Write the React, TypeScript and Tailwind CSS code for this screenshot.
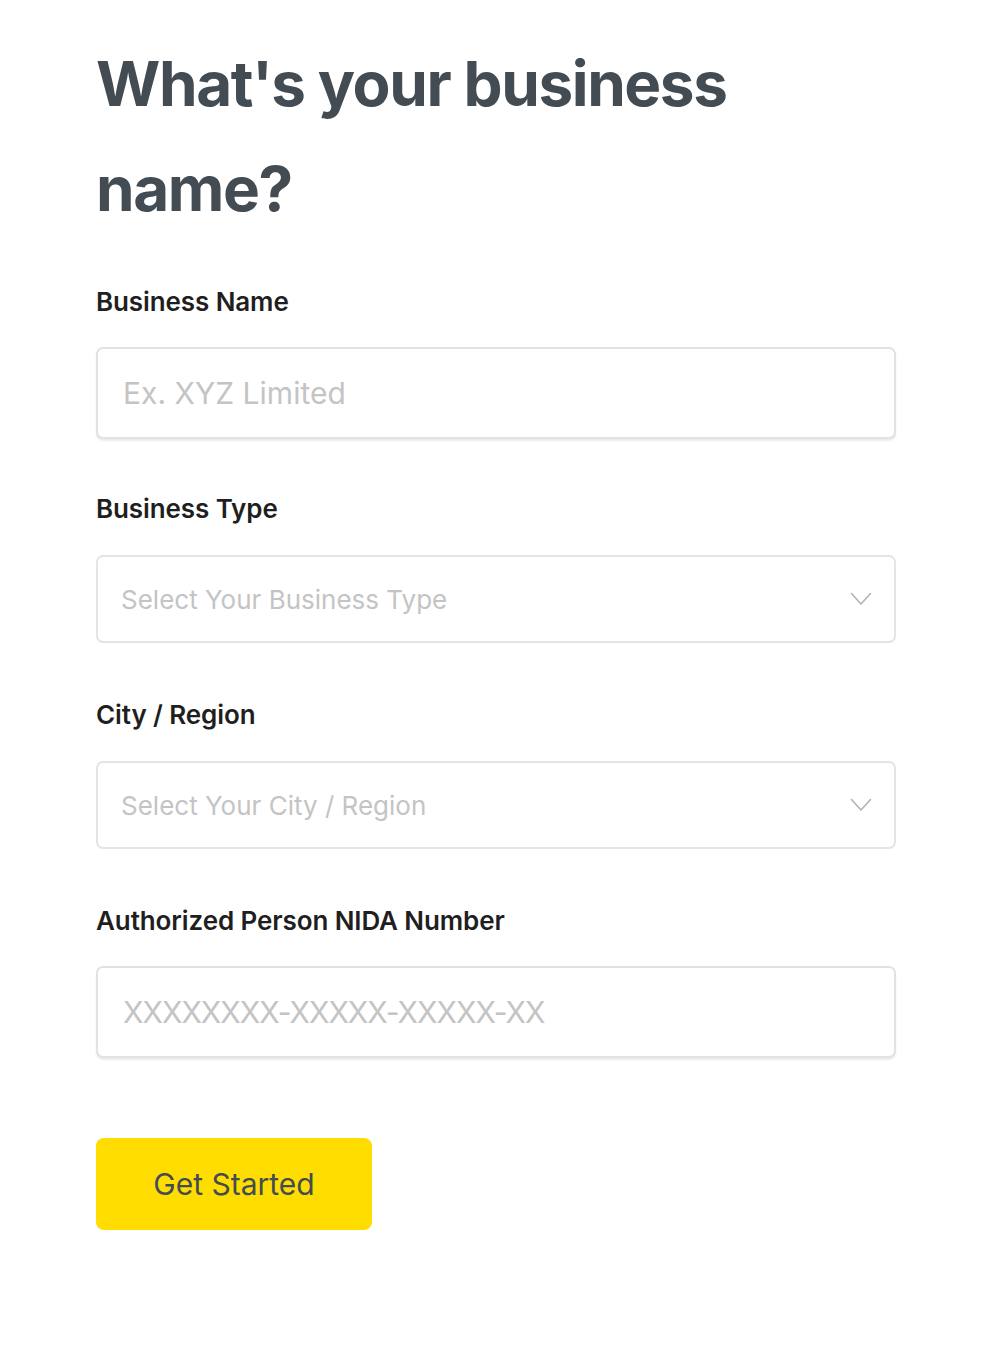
import React from 'react';

const Label: React.FC<{ children: React.ReactNode }> = ({ children }) => (
  <label className="block text-[26px] font-semibold text-[#1f1f1f] leading-[30px] tracking-[-0.1px]">{children}</label>
);

const TextField: React.FC<{ placeholder: string; tight?: boolean }> = ({ placeholder, tight }) => (
  <input
    type="text"
    placeholder={placeholder}
    className={
      tight
        ? "mt-[30px] block w-full h-[92px] rounded-[7px] border-2 border-[#e2e2e2] bg-white px-[25px] text-[30px] tracking-[-1px] text-[#333] outline-none shadow-[0_2px_2px_rgba(0,0,0,0.08)] placeholder:text-[#c4c4c4]"
        : "mt-[30px] block w-full h-[92px] rounded-[7px] border-2 border-[#e2e2e2] bg-white px-[25px] text-[30px] text-[#333] outline-none shadow-[0_2px_2px_rgba(0,0,0,0.08)] placeholder:text-[#c4c4c4]"
    }
  />
);

const Chevron = () => (
  <svg width="22" height="14" viewBox="0 0 22 14" fill="none" className="shrink-0">
    <polyline points="1.5,1.5 11,12 20.5,1.5" stroke="#b3b3b3" strokeWidth="1.6" strokeLinejoin="round" strokeLinecap="round" />
  </svg>
);

const SelectField: React.FC<{ placeholder: string }> = ({ placeholder }) => (
  <div className="mt-[31px] flex items-center justify-between w-full h-[88px] rounded-[7px] border-2 border-[#e4e4e4] bg-white pl-[23px] pr-[22px]">
    <span className="text-[26px] text-[#c4c4c4]">{placeholder}</span>
    <Chevron />
  </div>
);

export default function App() {
  return (
    <div className="min-h-[1350px] bg-white" style={{ fontFamily: 'Inter, "Noto Sans", sans-serif' }}>
      <div className="w-[800px] ml-[96px] pt-[31px]">
        <h1 className="text-[62px] font-bold leading-[105px] text-[#434b53] tracking-[-1.4px]">
          What's your business
          <br />
          name?
        </h1>

        <div className="mt-[46px]">
          <Label>Business Name</Label>
          <TextField placeholder="Ex. XYZ Limited" />
        </div>

        <div className="mt-[55px]">
          <Label>Business Type</Label>
          <SelectField placeholder="Select Your Business Type" />
        </div>

        <div className="mt-[57px]">
          <Label>City / Region</Label>
          <SelectField placeholder="Select Your City / Region" />
        </div>

        <div className="mt-[57px]">
          <Label>Authorized Person NIDA Number</Label>
          <TextField placeholder="XXXXXXXX-XXXXX-XXXXX-XX" tight />
        </div>

        <button className="mt-[80px] w-[276px] h-[92px] rounded-[8px] bg-[#ffdd00] text-[30px] text-[#434b53]">
          Get Started
        </button>
      </div>
    </div>
  );
}
